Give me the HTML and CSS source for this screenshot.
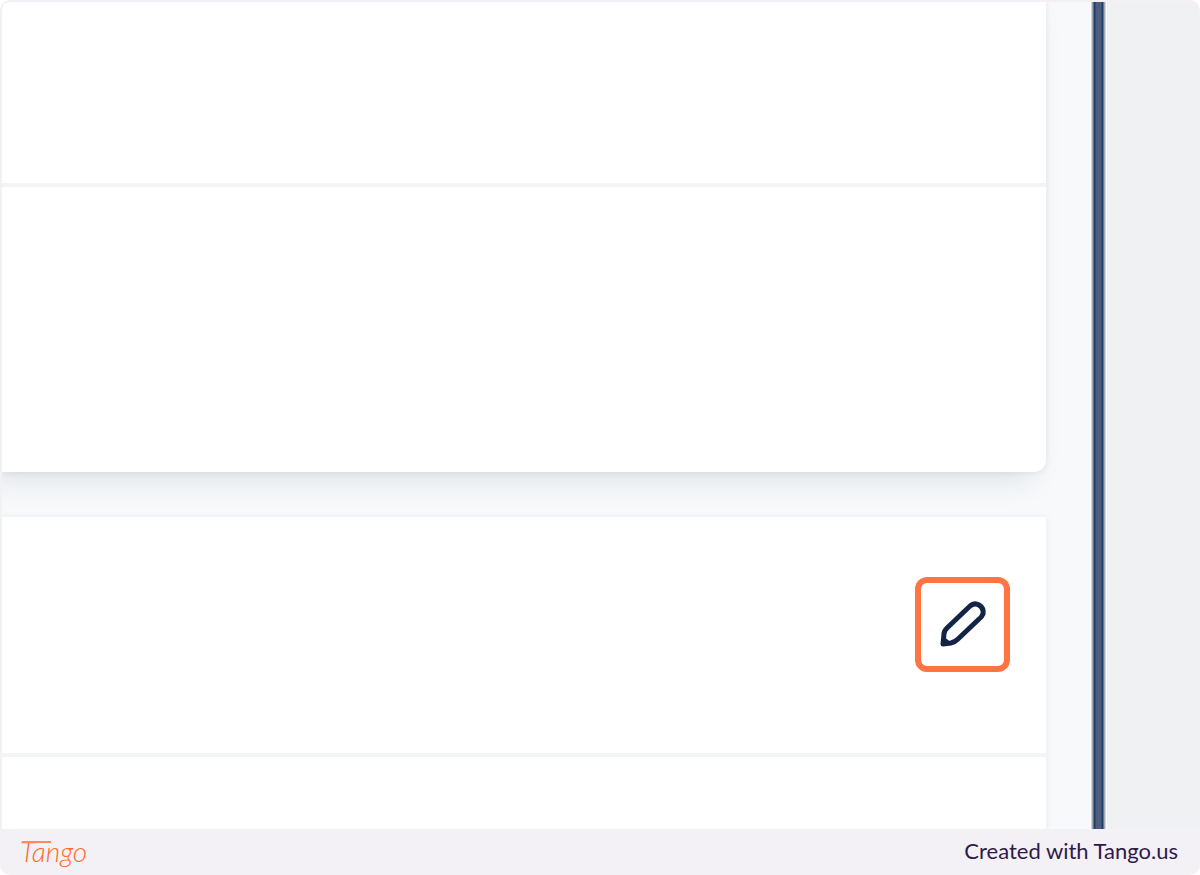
FILE: index.html
```
<!DOCTYPE html>
<html lang="en">

<head>
  <meta charset="utf-8">
  <meta name="viewport" content="width=device-width">
  <title>Tango</title>
  <link rel="stylesheet" href="styles.css">
</head>

<body>
  <div class="frame">

    <main class="stage">
      <div class="content">
        <section class="card">
          <div class="row header-row"></div>
          <div class="row body-row"></div>
        </section>

        <section class="card last-card">
          <div class="row edit-row">
            <button class="edit" aria-label="Edit">
              <svg viewBox="0 0 60 60" width="60" height="60" fill="none">
                <path d="M10 49 L11 39 Q11 36 14 33 L36 12 Q41 7 46 10 Q51 13 50 19 Q49 22 45 25 L25 44 Q22 47 18 48 Z" />
                <path class="tip" d="M9 50 L10 42 L17 48 Z" />
              </svg>
            </button>
          </div>
          <div class="row"></div>
        </section>
      </div>

      <div class="divider"></div>
      <aside class="side"></aside>
    </main>

    <footer>
      <a class="logo" href="#">Tango</a>
      <span class="credit">Created with Tango.us</span>
    </footer>

  </div>
</body>

</html>
```

FILE: styles.css
```
* {
  box-sizing: border-box;
}

body {
  margin: 0;
  background-color: white;
  font-family: Lato, "Liberation Sans", sans-serif;
}

.frame {
  display: flex;
  flex-direction: column;
  height: 100vh;
  padding: 2px 1px 0 2px;
  border-radius: 10px;
  background-color: #f3f0f6;
}

.stage {
  display: flex;
  flex: 1;
  min-height: 0;
  overflow: hidden;
  border-radius: 8px 8px 0 0;
  background-color: #f7f9fb;
}

.content {
  display: flex;
  flex: 1;
  flex-direction: column;
  gap: 45px;
  padding-right: 44px;
}

.card {
  border-radius: 0 0 12px 0;
  background-color: white;
  box-shadow: -12px 10px 28px rgba(40, 45, 60, 0.1), 0 1px 6px rgba(40, 45, 60, 0.08);
}

.last-card {
  flex: 1;
  border-radius: 0;
  box-shadow: 0 0 6px rgba(40, 45, 60, 0.08);
}

.row + .row {
  border-top: 4px solid #f3f4f6;
}

.header-row {
  height: 181px;
}

.body-row {
  height: 289px;
}

.edit-row {
  display: flex;
  justify-content: flex-end;
  height: 236px;
  padding: 60px 36px 0 0;
}

.edit {
  display: flex;
  align-items: center;
  justify-content: center;
  width: 95px;
  height: 95px;
  padding: 0;
  border: 6px solid #ff7442;
  border-radius: 12px;
  background-color: white;
  cursor: pointer;
}

.edit path {
  stroke: #132447;
  stroke-width: 5;
  stroke-linecap: round;
  stroke-linejoin: round;
}

.edit .tip {
  fill: #132447;
  stroke-width: 2;
}

/* dark bar with soft light edges */
.divider {
  width: 17px;
  background: linear-gradient(to right, #ffffff 1px, #9ba4b2 2px 3px, #1d3f6c 4px 5px, #4f5d7a 6px 11px, #1d3f6c 12px 13px, #a9abb4 14px 15px, #ffffff 16px);
}

.side {
  width: 92px;
  background-color: #f0f1f3;
}

footer {
  display: flex;
  align-items: center;
  justify-content: space-between;
  height: 46px;
  padding: 0 21px 3px 18px;
}

.logo {
  position: relative;
  color: #ff6b2c;
  font-size: 28px;
  font-style: italic;
  font-weight: 300;
  line-height: 36px;
  text-decoration: none;
}

/* long crossbar over the first letters */
.logo::before {
  content: "";
  position: absolute;
  top: 8px;
  left: 2px;
  width: 29px;
  height: 2px;
  background-color: #ff8a5c;
}

.credit {
  color: #2f1b47;
  font-size: 22px;
}
```
